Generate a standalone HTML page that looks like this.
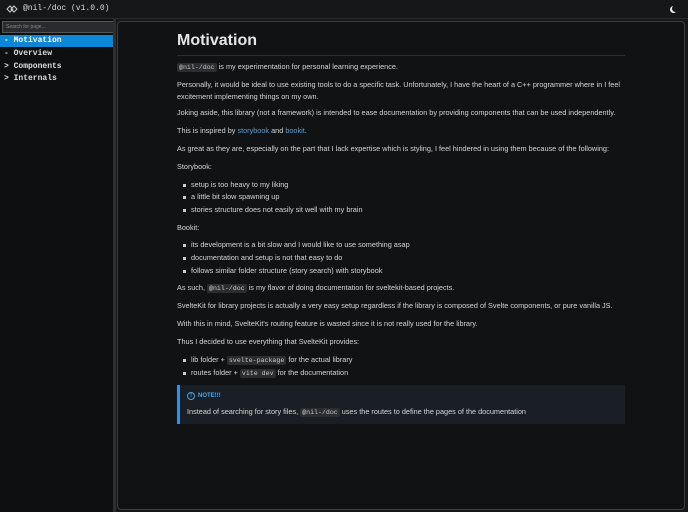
<!DOCTYPE html><html><head><style>
body{margin:0;width:688px;height:512px;background:#161719;overflow:hidden;font-family:"Liberation Sans",sans-serif;color:#d4d4d4;position:relative}
.m{font-family:"Liberation Mono",monospace}
.hdr{position:absolute;left:0;top:0;width:688px;height:18px;background:#161719;border-bottom:1px solid #2a2b2e}
.side{position:absolute;left:0;top:19px;width:113px;height:493px;background:#0e0f10}
.sep{position:absolute;left:113px;top:19px;width:3px;height:493px;background:#2e2f32}
.main{position:absolute;left:117px;top:21px;width:566px;height:487px;background:#111214;border:1.5px solid #3c3d40;border-radius:4px}
.t{position:absolute;left:177px;font-size:7.3px;line-height:10px;white-space:nowrap;color:#d6d6d6}
.li{left:191px}
.li:before{content:"";position:absolute;left:-8px;top:4px;width:3px;height:3px;background:#ccc}
code{font-family:"Liberation Mono",monospace;background:#2c2d30;border-radius:2px;padding:1px 2px;font-size:6.6px;color:#ccc}
a{color:#4aa3e6;text-decoration:none}
.nav{position:absolute;left:0;width:113px;height:12px;font-size:8px;line-height:12px;font-family:"Liberation Mono",monospace;color:#ddd;padding-left:4px;box-sizing:border-box;font-weight:bold}
</style></head><body>
<div class="hdr"></div>
<svg style="position:absolute;left:6px;top:5px" width="12" height="8" viewBox="0 0 12 8"><path d="M1 4 L4 1 L7 4 L4 7 Z M5 4 L8 1 L11 4 L8 7 Z" fill="none" stroke="#ccc" stroke-width="1"/></svg>
<div class="m" style="position:absolute;left:23px;top:4px;font-size:8px;color:#ddd">@nil-/doc (v1.0.0)</div>
<div style="position:absolute;left:672px;top:5px;width:7px;height:7px;border-radius:50%;box-shadow:-2px 1px 0 0 #eee"></div>
<div class="side"></div>
<div style="position:absolute;left:2px;top:21px;width:107px;height:10px;background:#2a2b2e;border:1px solid #555;font-size:5px;color:#888;line-height:10px;padding-left:3px;box-sizing:content-box">Search for page...</div>
<div class="nav" style="top:35px;background:#0f86d4;color:#fff">- Motivation</div>
<div class="nav" style="top:48px">- Overview</div>
<div class="nav" style="top:61px">&gt; Components</div>
<div class="nav" style="top:73px">&gt; Internals</div>
<div class="sep"></div>
<div class="main"></div>
<div style="position:absolute;left:177px;top:32px;font-size:16px;font-weight:bold;color:#e6e6e6">Motivation</div>
<div style="position:absolute;left:177px;top:55px;width:448px;height:1px;background:#2c2d30"></div>
<div class="t" style="top:62px"><code>@nil-/doc</code> is my experimentation for personal learning experience.</div>
<div class="t" style="top:80px">Personally, it would be ideal to use existing tools to do a specific task. Unfortunately, I have the heart of a C++ programmer where in I feel</div>
<div class="t" style="top:92px">excitement implementing things on my own.</div>
<div class="t" style="top:108px">Joking aside, this library (not a framework) is intended to ease documentation by providing components that can be used independently.</div>
<div class="t" style="top:126px">This is inspired by <a>storybook</a> and <a>bookit</a>.</div>
<div class="t" style="top:144px">As great as they are, especially on the part that I lack expertise which is styling, I feel hindered in using them because of the following:</div>
<div class="t" style="top:162px">Storybook:</div>
<div class="t li" style="top:180px">setup is too heavy to my liking</div>
<div class="t li" style="top:192px">a little bit slow spawning up</div>
<div class="t li" style="top:205px">stories structure does not easily sit well with my brain</div>
<div class="t" style="top:223px">Bookit:</div>
<div class="t li" style="top:240px">its development is a bit slow and I would like to use something asap</div>
<div class="t li" style="top:253px">documentation and setup is not that easy to do</div>
<div class="t li" style="top:266px">follows similar folder structure (story search) with storybook</div>
<div class="t" style="top:283px">As such, <code>@nil-/doc</code> is my flavor of doing documentation for sveltekit-based projects.</div>
<div class="t" style="top:301px">SvelteKit for library projects is actually a very easy setup regardless if the library is composed of Svelte components, or pure vanilla JS.</div>
<div class="t" style="top:319px">With this in mind, SvelteKit's routing feature is wasted since it is not really used for the library.</div>
<div class="t" style="top:337px">Thus I decided to use everything that SvelteKit provides:</div>
<div class="t li" style="top:355px">lib folder + <code>svelte-package</code> for the actual library</div>
<div class="t li" style="top:368px">routes folder + <code>vite dev</code> for the documentation</div>
<div style="position:absolute;left:177px;top:385px;width:448px;height:39px;background:#1a1f26;border-left:3px solid #3a8fd6;box-sizing:border-box"></div>
<div style="position:absolute;left:187px;top:392px;width:8px;height:8px;border:1px solid #4aa3e6;border-radius:50%;box-sizing:border-box;font-size:6px;line-height:6px;text-align:center;color:#4aa3e6;font-weight:bold">!</div>
<div class="t" style="left:198px;top:391px;font-size:6px;color:#4aa3e6;font-weight:bold">NOTE!!!</div>
<div class="t" style="left:187px;top:407px">Instead of searching for story files, <code>@nil-/doc</code> uses the routes to define the pages of the documentation</div>
</body></html>
